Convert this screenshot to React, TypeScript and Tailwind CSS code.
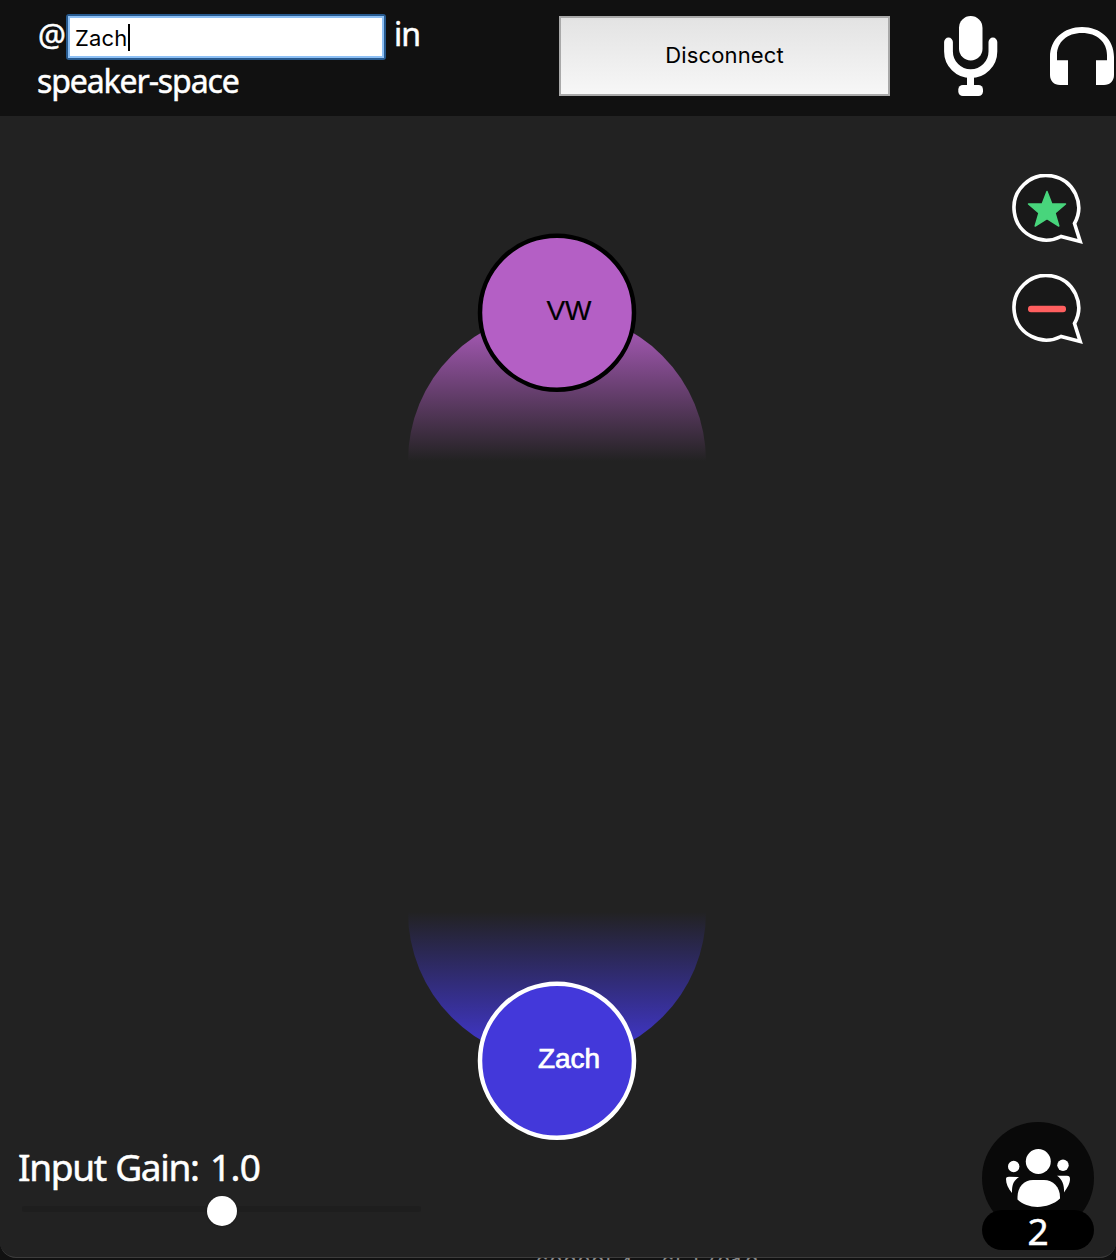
import React from "react";

function Mic() {
  return (
    <svg className="ml-[54px] h-20 w-[54px] shrink-0" viewBox="0 0 54 80" fill="none">
      <rect x="15" y="0" width="23.5" height="44.5" rx="11.75" fill="#fff" />
      <path d="M4.5 26v9.5a22.2 22.2 0 0 0 44.4 0V26" stroke="#fff" strokeWidth="8.8" strokeLinecap="round" />
      <path d="M23 59h7v13h-7z" fill="#fff" />
      <rect x="14.3" y="69" width="24.7" height="11" rx="4.5" fill="#fff" />
    </svg>
  );
}

function Headphones() {
  return (
    <svg className="ml-[52px] h-[58px] w-16 shrink-0" viewBox="0 0 64 58" fill="#fff">
      <path d="M0 30C0 12 14 0 32 0s32 12 32 30v18c0 6-4 10-10 10h-8V33.3h11V28C57 15 47 6 32 6S7 15 7 28v5.300h11V58h-8C4 58 0 54 0 48Z" />
    </svg>
  );
}

function Bubble({ children }: { children: React.ReactNode }) {
  return (
    <svg className="h-[72px] w-[72px]" viewBox="0 0 72 72">
      <path
        d="M49 62.500A32.300 32.300 0 1 1 62.500 49.500L68.200 67.500Z"
        fill="#191919"
        stroke="#fff"
        strokeWidth="3.6"
      />
      {children}
    </svg>
  );
}

function Speaker({ name, fill, ring, ink, flipped }: { name: string; fill: string; ring: string; ink: string; flipped?: boolean }) {
  const cy = flipped ? 148.7 : 80.7;
  const id = "glow-" + name;
  return (
    <svg className="h-[229px] w-[300px]" viewBox="0 0 300 229">
      <defs>
        <linearGradient id={id} x1="0" x2="0" y1={flipped ? "1" : "0"} y2={flipped ? "0" : "1"}>
          <stop offset="0" stopColor={fill} />
          <stop offset="1" stopColor={fill} stopOpacity="0" />
        </linearGradient>
      </defs>
      <path d={flipped ? "M1 0A149 149 0 0 0 299 0Z" : "M1 229A149 149 0 0 1 299 229Z"} fill={`url(#${id})`} />
      <circle cx="150" cy={cy} r="77" fill={fill} stroke={ring} strokeWidth="4.5" />
      <text
        x="162"
        y={flipped ? 155.500 : 87.500}
        textAnchor="middle"
        fill={ink}
        stroke={ink}
        strokeWidth={flipped ? 0.7 : 0.2}
        fontSize="28"
        fontFamily="Liberation Sans, sans-serif"
      >
        {name}
      </text>
    </svg>
  );
}

function Header() {
  return (
    <header className="flex h-[116px] shrink-0 items-start overflow-hidden bg-[#111111]">
      <div className="ml-[38px] w-[521px] pt-[14px] text-[32px] leading-[46px] text-white [-webkit-text-stroke:0.5px_white]">
        <div className="flex h-[46px] items-start">
          <span className="w-[28px] shrink-0 text-[31px] leading-[40px] tracking-tight">@</span>
          <div className="flex h-[46px] w-[320px] shrink-0 items-center rounded-[3px] border-2 border-[#275a8f] bg-white font-[Inter] text-[22px] leading-none text-black [-webkit-text-stroke:0]">
            <div className="flex h-full w-full items-center border-2 border-[#8dc0f5] pl-[5px]">
              <span className="pt-[2px] tracking-[0.2px]">Zach</span>
              <span className="h-[27px] w-[2px] bg-black" />
            </div>
          </div>
          <span className="ml-[8px] leading-[40px] tracking-[-1px]">in</span>
        </div>
        <div className="-ml-px leading-[41px] tracking-[-1.1px]">speaker-space</div>
      </div>
      <button className="mt-4 h-20 w-[331px] shrink-0 border-2 border-[#a9a9a9] bg-linear-to-b from-[#e3e3e3] to-[#f7f7f7] pb-[2px] font-[Inter] text-[22px] tracking-[0.15px] text-black">
        Disconnect
      </button>
      <div className="flex pt-4">
        <Mic />
        <div className="pt-[11px]">
          <Headphones />
        </div>
      </div>
    </header>
  );
}

function Stage() {
  return (
    <main className="flex grow justify-between">
      <div className="flex w-[407px] flex-col justify-end pb-[31px] pl-[18px]">
        <div className="text-[37px] leading-[44px] tracking-[-1.3px] whitespace-nowrap text-white [-webkit-text-stroke:0.5px_white] [word-spacing:1px]">
          Input Gain: <span className="ml-[2px] tracking-[-0.7px]">1.0</span>
        </div>
        <div className="relative mt-[7px] h-[30px] w-[404px]">
          <div className="ml-1 mt-[10px] h-[6px] w-[399px] rounded-full bg-[#1e1e1e]" />
          <div className="absolute top-0 left-[189px] h-[30px] w-[30px] rounded-full bg-white shadow" />
        </div>
      </div>
      <div className="flex w-[300px] flex-col justify-between pt-[116px] pb-[116px]">
        <Speaker name="VW" fill="#b45fc5" ring="#000000" ink="#000000" />
        <Speaker name="Zach" fill="#4338da" ring="#ffffff" ink="#ffffff" flipped />
      </div>
      <div className="flex w-[409px] flex-col items-end justify-between pt-[58px] pr-[22px] pb-[7px]">
        <div className="mr-[10px] flex flex-col gap-7">
          <Bubble>
            <path
              d="M35 17.500L39.800 30H53.500L43 39L46.800 52L35 44.700L23.200 52L27 39L16.500 30H30.200Z"
              fill="#48d57c"
              stroke="#48d57c"
              strokeWidth="1.5"
              strokeLinejoin="round"
            />
          </Bubble>
          <Bubble>
            <rect x="16" y="31.700" width="38" height="6.500" rx="3" fill="#ff5f5f" />
          </Bubble>
        </div>
        <div className="flex w-[112px] flex-col">
          <svg className="h-[88px] w-[112px] overflow-visible" viewBox="0 0 112 88" fill="#fff">
            <circle cx="56" cy="56" r="56" fill="#090909" />
            <circle cx="56.300" cy="39.500" r="12.500" />
            <circle cx="31.700" cy="44.500" r="5.700" />
            <circle cx="81" cy="43.300" r="5.700" />
            <path d="M35.500 77.500V75C35.500 65 42 58 51 58h11c9 0 16 7 16 17v1.500C67 87 46 88 35.500 77.500Z" />
            <path d="M37 55C31 59 30 63 30 71C26 66 24 62 24 57Q24 54.700 27 54.700Z" />
            <path d="M75 53.700H85Q88 53.700 88 57C88 62 85 66 82 70.500C82.500 63 80 57 75 53.700Z" />
          </svg>
          <div className="relative flex h-10 w-[112px] items-center justify-center rounded-full bg-black text-[37px] leading-none text-white [-webkit-text-stroke:0.5px_white]">
            <span className="mt-px">2</span>
          </div>
        </div>
      </div>
    </main>
  );
}

export default function App() {
  return (
    <div className="flex h-[1260px] w-[1116px] flex-col overflow-hidden bg-[#111111] font-[Noto_Sans,sans-serif]">
      <div className="flex h-[1258px] shrink-0 flex-col overflow-hidden rounded-b-[16px] border-b border-[#3c3c3c] bg-[#222222]">
        <Header />
        <Stage />
      </div>
      <div className="h-[2px] overflow-hidden pl-[535px] font-[Liberation_Mono] text-[23.300px] leading-[17px] whitespace-pre text-[#888888]">
        6020954{"  "}65l/012
      </div>
    </div>
  );
}
